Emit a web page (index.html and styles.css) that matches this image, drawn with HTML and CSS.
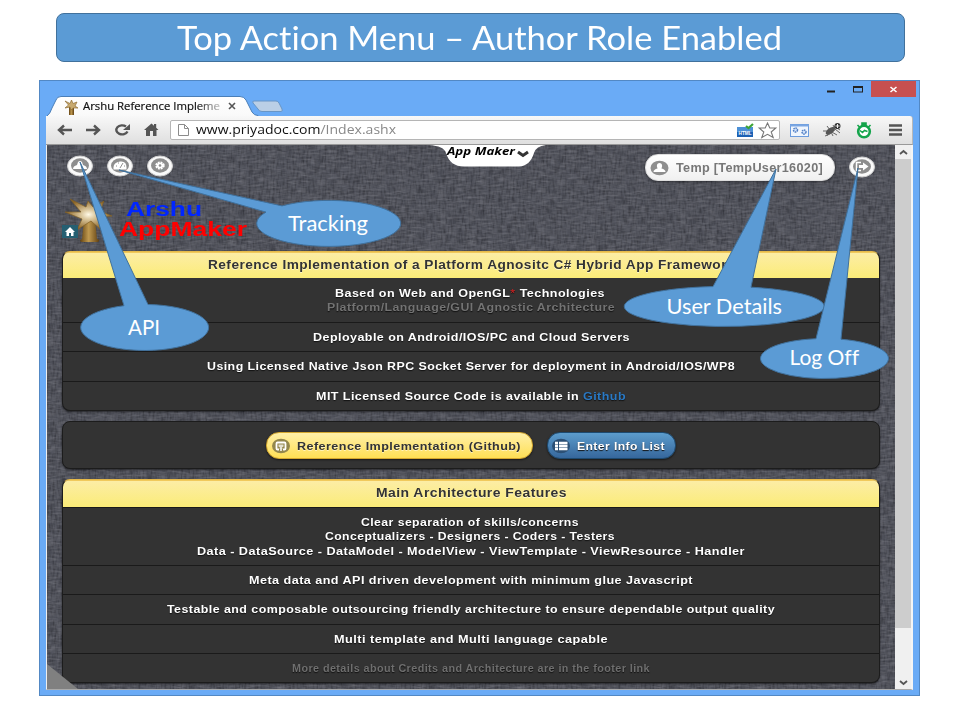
FILE: index.html
```html
<!DOCTYPE html>
<html lang="en">
<head>
<meta charset="utf-8">
<title>Top Action Menu</title>
<link rel="stylesheet" href="styles.css">
</head>
<body>
<main class="slide">
  <h1 class="title"><span class="fit" data-w="605">Top Action Menu – Author Role Enabled</span></h1>

  <section class="window">
    <header class="tabs">
      <svg class="tabshape" width="245" height="24" viewBox="0 0 245 24">
        <defs><linearGradient id="tg" x1="0" y1="0" x2="0" y2="1"><stop offset="0" stop-color="#fff"/><stop offset="1" stop-color="#f8f8f8"/></linearGradient>
        <linearGradient id="gold" x1="0" y1="0" x2="1" y2="0"><stop offset="0" stop-color="#60400f"/><stop offset=".45" stop-color="#c09a50"/><stop offset="1" stop-color="#5f3e10"/></linearGradient>
        <radialGradient id="star"><stop offset="0" stop-color="#fff9e6"/><stop offset=".3" stop-color="#dcc9a0"/><stop offset="1" stop-color="#8c6425"/></radialGradient></defs>
        <path d="M1 20Q4 18 6 12L10 4Q11 0.500 15 0.500H194Q198 0.500 200 4L206 16Q208 19.500 212 19.500V24H0Z" fill="url(#tg)" stroke="#4b7fb8"/>
        <rect x="0" y="20" width="214" height="4" fill="#f8f8f8"/>
        <path d="M208 5H230Q232 5 233 7L236 13Q237 15.500 235 15.500H216Q213 15.500 212 13L207 7Q206 5 208 5Z" fill="#bacfe6" stroke="#6896c7"/>
        <g transform="translate(18,4)">
          <path d="M5 7h5v8H5z" fill="url(#gold)"/><path d="M7.500 0 9 3.500 13 2 11 6 14 8 9.500 8 7 10 6 7 1 8 4.500 5 1 1 6 3.500Z" fill="#c8aa70" stroke="#8f6e36" stroke-width=".7"/>
        </g>
        <path d="m183 7 6 6m0-6-6 6" stroke="#555" stroke-width="1.600"/>
      </svg>
      <span class="tabtitle"><span class="fit" data-w="137">Arshu Reference Impleme</span></span>
      <svg class="controls" width="90" height="16" viewBox="0 0 90 16">
        <rect x="45" width="45" height="16" fill="#c75050"/>
        <path d="M1 10.500H9" stroke="#222" stroke-width="2"/>
        <rect x="27.500" y="5.500" width="9" height="5.500" fill="none" stroke="#222"/><path d="M27 6h10" stroke="#222" stroke-width="2"/>
        <path d="m64.500 6 6 5m0-5-6 5" stroke="#fff" stroke-width="1.600"/>
      </svg>
    </header>

    <nav class="toolbar">
      <svg class="navicons" width="124" height="28" viewBox="0 0 124 28" fill="none" stroke="#555" stroke-width="2.400">
        <path d="M26 14H13M18 9.500 13 14l5 4.500M40 14H53M48 9.500 53 14l-5 4.500"/>
        <path d="M81.500 15.500A5.800 4.500 0 1 1 80 10.500"/><path d="M84 8v6h-7z" fill="#555" stroke="none"/>
        <path d="M98 14 105.500 7.500 108 9.700V8h2.200v3.700l2.300 2.300h-2v6h-3.500v-5h-3v5H100v-6z" fill="#555" stroke="none"/>
      </svg>
      <div class="address">
        <svg width="13" height="14" viewBox="0 0 13 14"><path d="M1.500 1.500h6l4 4v7h-10zM7.500 1.500v4h4" fill="#fff" stroke="#8b8b8b"/></svg>
        <span class="url"><span class="fit" data-w="200">www.priyadoc.com<i>/Index.ashx</i></span></span>
        <svg class="marks" width="42" height="18" viewBox="0 0 42 18">
          <rect x="0" y="6" width="16" height="10" fill="#4d90d6"/><rect x="0" y="11" width="16" height="5" fill="#1b61b4"/>
          <text x="1.500" y="14" textLength="13" lengthAdjust="spacingAndGlyphs" class="htmlmark">HTML</text>
          <path d="m9 5 2.500 2 4.500-4" fill="none" stroke="#3ea436" stroke-width="2.200"/>
          <path d="m30.500 2 2.300 5h6l-4.600 4 2 5.500-5.700-3.200-5.700 3.200 2-5.500-4.600-4h6z" fill="#fff" stroke="#777" stroke-width="1.100"/>
        </svg>
      </div>
      <svg class="extras" width="124" height="28" viewBox="0 0 124 28">
        <rect x="2.500" y="8.500" width="18" height="12" fill="#eff5fd" stroke="#6b9bdd"/><path d="M2 9.500h19" stroke="#7aa6e2" stroke-width="2"/>
        <circle cx="7.500" cy="14" r="2" fill="#cfe0f8" stroke="#517fc4" stroke-width="1.500" stroke-dasharray="1.500 .6"/><circle cx="16" cy="16" r="2" fill="#cfe0f8" stroke="#517fc4" stroke-width="1.500" stroke-dasharray="1.500 .6"/>
        <path d="m37 20 5-2 7-6M35 15l7 0 7 4M39 10l3 4 3 6M45 9l2 4 5 4M39 20l1-4M46 10l6 4" stroke="#666" fill="none"/><ellipse cx="42.500" cy="15" rx="5.500" ry="2.600" transform="rotate(-35 42 15)" fill="#555"/><circle cx="49.500" cy="10" r="3" fill="#333"/><path d="M49.500 8v4m-2-2h4" stroke="#eee"/>
        <circle cx="76" cy="15.500" r="5.800" fill="#fff" stroke="#14a44b" stroke-width="2.600"/><path d="M74 7h4v3h-4zM69.500 9l3 3m7 0 3-3" stroke="#14a44b" stroke-width="1.600" fill="#14a44b"/><path d="m72 14.500 2.500 2 2-2 3 1" fill="none" stroke="#14a44b" stroke-width="1.600"/>
        <path d="M101 9.500h13M101 14h13M101 18.500h13" stroke="#555" stroke-width="2.400"/>
      </svg>
    </nav>

    <div class="view">
      <div class="page">
        <div class="pagetop">
          <svg class="actions" width="120" height="30" viewBox="0 0 120 30">
            <g fill="#fafafa" stroke="#cfcfcf"><ellipse cx="18" cy="14" rx="12.500" ry="10"/><ellipse cx="58" cy="14" rx="12.500" ry="10"/><ellipse cx="98" cy="14" rx="12.500" ry="10"/></g>
            <g fill="#8e8e8e"><ellipse cx="18" cy="13.500" rx="9" ry="7.200"/><ellipse cx="58" cy="13.500" rx="9" ry="7.200"/><ellipse cx="98" cy="13.500" rx="9" ry="7.200"/></g>
            <path d="M11 17q0-3 4-4l1-3q2-2 4 0l1 3q4 1 4 4z" fill="#fff"/>
            <path d="M51.500 17.500v-2q0-5 6.500-6t6.500 6v2z" fill="#fff"/><path d="m58 16 3-5M54 14h1m1-3h1m5 3h1" stroke="#8e8e8e"/>
            <ellipse cx="98" cy="13.500" rx="3.500" ry="2.800" fill="#fff" stroke="#fff" stroke-width="2.500" stroke-dasharray="1.700 .8"/><circle cx="98" cy="13.500" r="1.300" fill="#8e8e8e"/>
          </svg>
          <div class="notch">
            <svg width="120" height="23" viewBox="0 0 120 23"><path d="M0 0Q15 1 17 8Q21 21.500 35 21.500H90Q101 21 105 8Q107 1 117 0Z" fill="#fff"/><path d="m89 7 5 3.500 5-3.500" fill="none" stroke="#333" stroke-width="3"/></svg>
            <span class="maker"><span class="fit" data-w="68">App Maker</span></span>
          </div>
          <div class="userpill">
            <svg width="19" height="16" viewBox="0 0 19 16"><ellipse cx="9.500" cy="8" rx="9" ry="7.300" fill="#8e8e8e"/><path d="M3.500 12q0-2.500 4-3.500-2-5 2-5.500 4 .5 2 5.500 4 1 4 3.500z" fill="#fff"/></svg>
            <span class="fit" data-w="147">Temp [TempUser16020]</span>
          </div>
          <svg class="logoff" width="28" height="26" viewBox="0 0 28 26"><ellipse cx="14" cy="12" rx="12.500" ry="10" fill="#fafafa" stroke="#cfcfcf"/><ellipse cx="14" cy="11.500" rx="9" ry="7.200" fill="#8e8e8e"/><path d="M13 7.500H8.500v8H13" fill="none" stroke="#fff" stroke-width="1.500"/><path d="M11 10h4V7.500l5.500 4-5.500 4V13h-4z" fill="#fff"/></svg>
          <div class="brand">
            <svg width="56" height="48" viewBox="0 0 56 48">
              <path d="M22 23H33L35 42Q39 43 36 45H20Q16 44 20 42Z" fill="url(#gold)"/>
              <path d="M26 4 31 10 42 4 38 14 50 19 37 20 38 32 29 24 15 33 20 22 3 15 19 15 8 2 24 10Z" fill="url(#star)" stroke="#806027" stroke-width=".7"/>
              <rect x="0" y="28" width="16" height="13" fill="#255f72"/><path d="m3 35 5-5 5 5h-1.500v4h-2.500v-3H7v3H4.500v-4z" fill="#fff"/>
            </svg>
            <div class="brandtext"><b class="blue"><span class="fit" data-w="76">Arshu</span></b><b class="red"><span class="fit" data-w="128">AppMaker</span></b></div>
          </div>
        </div>

        <section class="card intro">
          <h2><span class="fit" data-w="527">Reference Implementation of a Platform Agnositc C# Hybrid App Framework</span></h2>
          <div class="row two"><span class="fit nudge" data-w="270">Based on Web and OpenGL<em>*</em> Technologies</span><span class="fit muted" data-w="288">Platform/Language/GUI Agnostic Architecture</span></div>
          <div class="row"><span class="fit" data-w="317">Deployable on Android/IOS/PC and Cloud Servers</span></div>
          <div class="row"><span class="fit" data-w="528">Using Licensed Native Json RPC Socket Server for deployment in Android/IOS/WP8</span></div>
          <div class="row"><span class="fit" data-w="310">MIT Licensed Source Code is available in <a>Github</a></span></div>
        </section>

        <section class="card buttons">
          <div class="btn yellow"><svg width="18" height="16" viewBox="0 0 18 16"><ellipse cx="9" cy="8" rx="9" ry="7.300" fill="#93874d"/><rect x="4.500" y="4.500" width="9" height="7" rx="1" fill="none" stroke="#fff" stroke-width="1.800"/><path d="M7 10.500h4v3H7z" fill="#93874d"/><path d="M6.500 6.500h5v2l-1.500 1v3.500H8V9.500l-1.500-1z" fill="#fff" opacity=".75"/></svg><span class="fit" data-w="224">Reference Implementation (Github)</span></div>
          <div class="btn azure"><svg width="18" height="16" viewBox="0 0 18 16"><ellipse cx="9" cy="8" rx="9" ry="7.300" fill="#2c5075"/><path d="M3 5h3M3 8h3M3 11h3M7 5H15.500M7 8H15.500M7 11H15.500" stroke="#fff" stroke-width="2.400"/></svg><span class="fit" data-w="88">Enter Info List</span></div>
        </section>

        <section class="card features">
          <h2><span class="fit" data-w="191">Main Architecture Features</span></h2>
          <div class="row three"><span class="fit nudge" data-w="218">Clear separation of skills/concerns</span><span class="fit nudge" data-w="290">Conceptualizers - Designers - Coders - Testers</span><span class="fit" data-w="548">Data - DataSource - DataModel - ModelView - ViewTemplate - ViewResource - Handler</span></div>
          <div class="row"><span class="fit" data-w="444">Meta data and API driven development with minimum glue Javascript</span></div>
          <div class="row"><span class="fit" data-w="608">Testable and composable outsourcing friendly architecture to ensure dependable output quality</span></div>
          <div class="row"><span class="fit" data-w="274">Multi template and Multi language capable</span></div>
          <div class="row small"><span class="fit" data-w="358">More details about Credits and Architecture are in the footer link</span></div>
        </section>
        <div class="corner"></div>
      </div>
      <div class="scroll">
        <svg width="16" height="14" viewBox="0 0 16 14"><path d="m5 9 3.500-3L12 9" fill="none" stroke="#555" stroke-width="1.800"/></svg>
        <div class="thumb"></div>
        <svg width="16" height="14" viewBox="0 0 16 14"><path d="m5 6 3.500 3L12 6" fill="none" stroke="#555" stroke-width="1.800"/></svg>
      </div>
    </div>
  </section>

  <svg class="callouts" width="960" height="720" viewBox="0 0 960 720">
    <g fill="#5b9bd5" stroke="#41719c">
      <path d="M80 162 124 305.700A64 23 0 1 0 148 304.500Z"/>
      <path d="M119 170 266 212.100A72 23 0 1 0 282 205.900Z"/>
      <path d="M776 169 713 286.600A100 20 0 1 0 751 287.200Z"/>
      <path d="M858 168 816 338.700A64 20 0 1 0 841 339.200Z"/>
    </g>
    <g class="calltext">
      <text x="128" y="335" textLength="32" lengthAdjust="spacingAndGlyphs">API</text>
      <text x="288" y="231" textLength="80" lengthAdjust="spacingAndGlyphs">Tracking</text>
      <text x="666.500" y="314" textLength="115.500" lengthAdjust="spacingAndGlyphs">User Details</text>
      <text x="789.500" y="365" textLength="69.500" lengthAdjust="spacingAndGlyphs">Log Off</text>
    </g>
  </svg>
</main>
<script src="fit.js"></script>
</body>
</html>
```
FILE: fit.js
```js
// Stretch each label horizontally to its declared width.
document.querySelectorAll('.fit').forEach(function (el) {
  var target = Number(el.dataset.w);
  var natural = el.getBoundingClientRect().width;
  el.style.transform = 'scaleX(' + target / natural + ')';
  el.style.marginRight = (target - natural) + 'px';
});
```
FILE: styles.css
```css
* { box-sizing: border-box; }
body { margin: 0; background: #fff; font-family: "Liberation Sans", sans-serif; font-variant-ligatures: none; }
svg { display: block; flex: none; }
.slide { position: relative; width: 960px; height: 720px; overflow: hidden; padding: 13px 40px 0 39px; }
.fit { display: inline-block; white-space: nowrap; transform-origin: 0 50%; flex: none; }
.title { margin: 0 15px 18px 17px; height: 49px; border: 1px solid #41719c; border-radius: 8px; background: #5b9bd5; color: #fff; font: 400 32px/47px Lato, sans-serif; font-variant-ligatures: none; text-align: center; }
.title .fit { margin-left: -2px; }
.window { width: 881px; height: 616px; border: 1px solid #5288c4; background: #6aabf6; padding: 0 6px; }

.tabs { position: relative; height: 35px; display: flex; justify-content: space-between; padding-top: 15px; }
.tabtitle { position: absolute; left: 37px; top: 14px; width: 138px; overflow: hidden; font: 11px/21px "Open Sans", sans-serif; color: #111; -webkit-mask-image: linear-gradient(90deg, #000 82%, #0003); mask-image: linear-gradient(90deg, #000 82%, #0003); -webkit-text-stroke: .2px #111; }
.controls { margin: -15px -3px 0 0; }
.toolbar { position: relative; height: 29px; display: flex; background: linear-gradient(#f8f8f8, #dfdfdf); border-bottom: 1px solid #999; border-right: 1px solid #b8b8b8; border-radius: 0 3px 0 0; }
.navicons { width: 124px; }
.address { width: 611px; height: 20px; margin-top: 4px; display: flex; align-items: center; background: #fff; border: 1px solid #b5b5b5; border-radius: 2px; padding-left: 6px; }
.url { margin-left: 6px; font: 12px/18px "Open Sans", sans-serif; color: #111; }
.url i { font-style: normal; color: #888; }
.marks { margin-left: auto; }
.htmlmark { font: bold 6px "Liberation Sans", sans-serif; fill: #fff; }
.extras { margin-left: 8px; }

.view { display: flex; height: 545px; border-left: 1px solid #eee; border-right: 2px solid #f5f5f5; border-bottom: 1px solid #aaa; }
.page { position: relative; width: 848px; height: 544px; overflow: hidden; padding: 0 15px; background-color: #4e5059;
  background-image: url("data:image/svg+xml,%3Csvg xmlns='http://www.w3.org/2000/svg' width='240' height='200'%3E%3Cfilter id='a' x='0' y='0' width='1' height='1' color-interpolation-filters='sRGB'%3E%3CfeTurbulence type='fractalNoise' baseFrequency='.5 .1' numOctaves='2' stitchTiles='stitch'/%3E%3CfeColorMatrix values='0 0 0 0 .1 0 0 0 0 .1 0 0 0 0 .12 .9 0 0 0 -.35'/%3E%3C/filter%3E%3Cfilter id='b' x='0' y='0' width='1' height='1' color-interpolation-filters='sRGB'%3E%3CfeTurbulence type='fractalNoise' baseFrequency='.1 .5' numOctaves='2' seed='4' stitchTiles='stitch'/%3E%3CfeColorMatrix values='0 0 0 0 .6 0 0 0 0 .6 0 0 0 0 .63 .7 0 0 0 -.25'/%3E%3C/filter%3E%3Crect width='240' height='200' filter='url(%23a)'/%3E%3Crect width='240' height='200' filter='url(%23b)'/%3E%3C/svg%3E"); }
.pagetop { position: relative; height: 106px; display: flex; align-items: flex-start; }
.actions { margin: 7px 0 0 0; }
.notch { position: absolute; left: 367px; top: 0; }
.maker { position: absolute; left: 18px; top: 0; font: italic bold 11px/11px "Open Sans", sans-serif; color: #000; }
.userpill { margin: 9px 0 0 463px; width: 190px; height: 27px; display: flex; align-items: center; gap: 7px; padding-left: 4px; border: 1px solid #ddd; border-radius: 13px; background: linear-gradient(#fff, #f0f0f0); color: #777; font-weight: bold; font-size: 12px; letter-spacing: .3px; box-shadow: 0 1px 3px #0006; }
.logoff { margin: 10px 0 0 13px; }
.brand { position: absolute; left: 0; top: 52px; display: flex; }
.brandtext { display: flex; flex-direction: column; margin: 2px 0 0 1px; font-size: 20px; line-height: 20px; }
.blue { color: #0026ff; margin-left: 7px; }
.red { color: #f00; }

.card { width: 818px; background: #333; border: 1px solid #1c1c1c; border-radius: 8px; overflow: hidden; box-shadow: 0 1px 2px #0008; color: #fff; font-size: 11px; font-weight: bold; letter-spacing: .4px; text-shadow: 0 1px 1px #111; }
.card h2 { margin: 0; height: 26px; background: linear-gradient(#fceda7, #fbec78); color: #333; font-size: 12px; line-height: 26px; text-align: center; text-shadow: 0 1px 0 #fff8; box-shadow: inset 0 1px #f0c95c; }
.intro, .features { border-top-color: #e5b94a; }
.row { height: 29.300px; display: flex; flex-direction: column; align-items: center; justify-content: center; line-height: 14.300px; border-top: 1px solid #1a1a1a; }
.row .nudge { position: relative; left: -1.500px; }
.row em { color: #e02020; font-style: normal; font-weight: normal; }
.row a { color: #2a79c4; }
.row .muted { color: #737373; }
.intro { height: 160px; }
.intro .two { height: 44px; border-top: 0; }
.buttons { height: 48px; margin-top: 10px; display: flex; gap: 14px; padding: 10px 0 0 203px; }
.btn { height: 27px; display: flex; align-items: center; border: 1px solid; border-radius: 13px; padding-left: 5px; gap: 7px; box-shadow: 0 1px 2px #0008; font-size: 11.500px; }
.yellow { width: 267px; background: linear-gradient(#fff0a8, #fedf55); border-color: #d4a72e; color: #333; text-shadow: 0 1px 0 #fff8; }
.azure { width: 129px; background: linear-gradient(#5c9ccc, #36679c); border-color: #1d4a70; padding-left: 4px; }
.features { height: 204px; margin-top: 10px; }
.features h2 { height: 27px; }
.features .three { height: 58px; }
.features .small { color: #6f6f6f; font-size: 10px; padding-top: 2px; }
.corner { position: absolute; left: 0; bottom: 0; width: 31px; height: 25px; background: #808080; clip-path: polygon(0 0, 100% 100%, 0 100%); }
.scroll { width: 16px; background: #f0f0f0; display: flex; flex-direction: column; }
.thumb { height: 469px; margin-bottom: auto; background: #cdcdcd; }
.callouts { position: absolute; left: 0; top: 0; }
.calltext { font: 21px Lato, sans-serif; font-variant-ligatures: none; fill: #fff; }
```
